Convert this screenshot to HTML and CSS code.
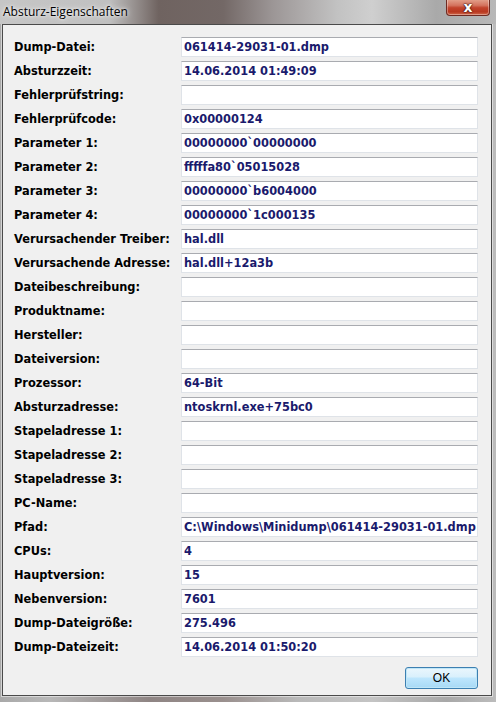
FILE: index.html
```html
<!DOCTYPE html>
<html lang="de">
<head>
<meta charset="utf-8">
<title>Absturz-Eigenschaften</title>
<link rel="stylesheet" href="styles.css">
</head>
<body>
<div class="window">
  <div class="titlebar">
    <span class="title">Absturz-Eigenschaften</span>
    <div class="close"><span>x</span></div>
  </div>
  <div class="client">
    <div class="grid">
      <div class="lbl">Dump-Datei:</div><div class="fld">061414-29031-01.dmp</div>
      <div class="lbl">Absturzzeit:</div><div class="fld">14.06.2014 01:49:09</div>
      <div class="lbl">Fehlerprüfstring:</div><div class="fld"></div>
      <div class="lbl">Fehlerprüfcode:</div><div class="fld">0x00000124</div>
      <div class="lbl">Parameter 1:</div><div class="fld">00000000`00000000</div>
      <div class="lbl">Parameter 2:</div><div class="fld">fffffa80`05015028</div>
      <div class="lbl">Parameter 3:</div><div class="fld">00000000`b6004000</div>
      <div class="lbl">Parameter 4:</div><div class="fld">00000000`1c000135</div>
      <div class="lbl">Verursachender Treiber:</div><div class="fld">hal.dll</div>
      <div class="lbl">Verursachende Adresse:</div><div class="fld">hal.dll+12a3b</div>
      <div class="lbl">Dateibeschreibung:</div><div class="fld"></div>
      <div class="lbl">Produktname:</div><div class="fld"></div>
      <div class="lbl">Hersteller:</div><div class="fld"></div>
      <div class="lbl">Dateiversion:</div><div class="fld"></div>
      <div class="lbl">Prozessor:</div><div class="fld">64-Bit</div>
      <div class="lbl">Absturzadresse:</div><div class="fld">ntoskrnl.exe+75bc0</div>
      <div class="lbl">Stapeladresse 1:</div><div class="fld"></div>
      <div class="lbl">Stapeladresse 2:</div><div class="fld"></div>
      <div class="lbl">Stapeladresse 3:</div><div class="fld"></div>
      <div class="lbl">PC-Name:</div><div class="fld"></div>
      <div class="lbl">Pfad:</div><div class="fld">C:\Windows\Minidump\061414-29031-01.dmp</div>
      <div class="lbl">CPUs:</div><div class="fld">4</div>
      <div class="lbl">Hauptversion:</div><div class="fld">15</div>
      <div class="lbl">Nebenversion:</div><div class="fld">7601</div>
      <div class="lbl">Dump-Dateigröße:</div><div class="fld">275.496</div>
      <div class="lbl">Dump-Dateizeit:</div><div class="fld">14.06.2014 01:50:20</div>
    </div>
    <div class="actions">
      <button class="ok">OK</button>
    </div>
  </div>
</div>
</body>
</html>
```

FILE: styles.css
```css
html, body {
  margin: 0;
  padding: 0;
}
body {
  width: 496px;
  height: 702px;
  overflow: hidden;
}
.window {
  width: 496px;
  height: 702px;
  box-sizing: border-box;
  padding: 0 4px 6px 2px;
  display: flex;
  flex-direction: column;
  background:
    linear-gradient(to right, #a9a9a9 0%, #b8b8b8 10%, #8f8584 30%, #9a908e 45%, #b9b9b9 60%, #c4c4c4 75%, #a8a8a8 90%, #bcbcbc 100%);
}
.titlebar {
  height: 24px;
  flex: none;
  position: relative;
  background: linear-gradient(to right, #c6c6c6 0%, #c0c0c0 22%, #6f6360 32%, #736866 45%, #9c9696 55%, #c2c2c2 68%, #cfcfcf 75%, #a9a9a9 88%, #b8b8b8 100%);
  margin: 0 -4px 0 -2px;
}
.title {
  position: absolute;
  left: 3px;
  top: 3px;
  font-family: "Open Sans", "Noto Sans", sans-serif;
  font-size: 12px;
  color: #000;
  text-shadow: 0 0 6px rgba(255,255,255,0.9), 0 0 3px rgba(255,255,255,0.9);
}
.close {
  position: absolute;
  left: 446px;
  top: -1px;
  width: 44px;
  height: 17px;
  box-sizing: border-box;
  border: 1px solid #6e2b22;
  border-top: none;
  border-radius: 0 0 4px 4px;
  background: linear-gradient(to bottom, #e4a590 0%, #d4735e 40%, #c2432c 55%, #b83820 80%, #d06a4c 100%);
  box-shadow: inset 0 0 0 1px rgba(255,255,255,0.35);
  display: flex;
  align-items: center;
  justify-content: center;
}
.close span {
  font-family: "DejaVu Sans", sans-serif;
  font-weight: bold;
  font-size: 14px;
  line-height: 16px;
  color: #fff;
  margin-top: -1px;
  text-shadow: 0 0 1px #3a1510, 0 0 1px #3a1510, 0 0 2px #3a1510;
}
.client {
  flex: 1;
  background: #f0f0f0;
  border: 1px solid #4a4a4a;
  box-shadow: 0 0 0 1px rgba(255,255,255,0.5);
  display: flex;
  flex-direction: column;
  padding: 12px 13px 0 11px;
}
.grid {
  display: grid;
  grid-template-columns: 167px 297px;
  row-gap: 4px;
  align-items: center;
}
.lbl, .fld {
  font-family: "DejaVu Sans", sans-serif;
  font-weight: bold;
  font-size: 11.4px;
  white-space: nowrap;
}
.lbl {
  color: #000;
}
.fld {
  height: 20px;
  box-sizing: border-box;
  background: #fff;
  border: 1px solid #dfe3e8;
  border-top-color: #a9abb0;
  color: #1a1a6c;
  padding: 0 0 0 2px;
  line-height: 18px;
  overflow: hidden;
}
.actions {
  display: flex;
  justify-content: flex-end;
  margin-top: 10px;
}
.ok {
  width: 73px;
  height: 22px;
  box-sizing: border-box;
  border: 1px solid #3c7fb1;
  border-radius: 3px;
  background: linear-gradient(to bottom, #eaf6fd 0%, #d9f0fc 45%, #bee6fd 50%, #a7d9f5 100%);
  box-shadow: inset 0 0 0 1px #bfe6f7;
  font-family: "Liberation Sans", Arial, sans-serif;
  font-size: 12px;
  color: #000;
  padding: 0;
}
```
